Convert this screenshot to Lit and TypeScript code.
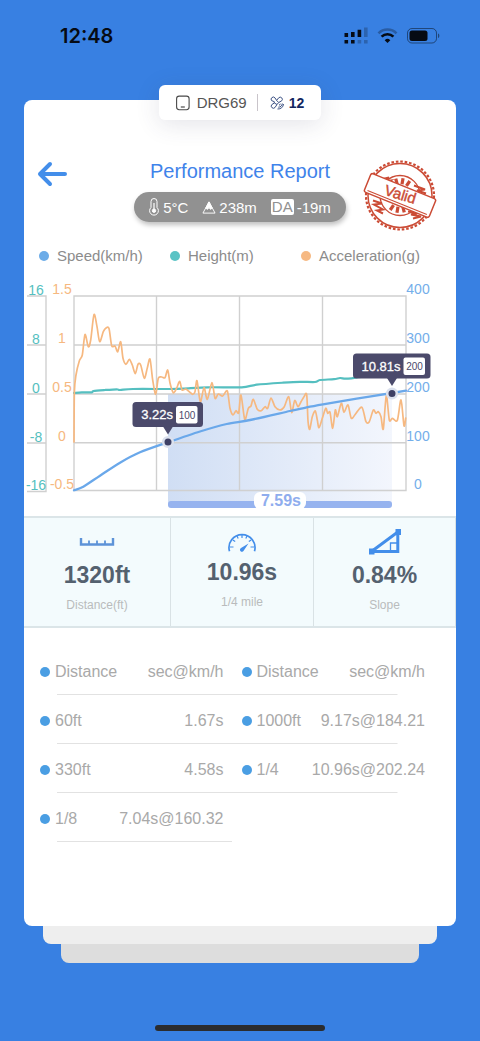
import { LitElement, html, svg, css } from "lit";
import { customElement } from "lit/decorators.js";

type Point = [number, number];

const ACCELERATION: Point[] = [
  [74, 442], [74.4, 392], [76, 375], [79.3, 361], [82.3, 355], [85, 334.5], [88.3, 346.7], [90.7, 340],
  [94, 314.5], [97, 326.7], [99.7, 341.7], [103.3, 331.7], [106, 328], [109, 328.5], [111.7, 345.7],
  [115, 346], [117.7, 351.7], [120.7, 341.7], [123, 358.3], [126, 364.3], [129.3, 359.3], [132.3, 365],
  [135.3, 373.7], [138, 364.3], [140.7, 365], [144.3, 378.3], [147.3, 368], [150, 359], [152.7, 380],
  [155.7, 394.3], [158.3, 378.3], [161.7, 377], [165, 377.7], [167.7, 370], [170, 383], [173.3, 392.7],
  [176.7, 388], [179.7, 381.3], [182, 390], [185.7, 389], [189.3, 391.7], [192.7, 394.3], [195, 391.7],
  [197, 380.7], [200.3, 401.7], [204, 387.7], [207.3, 399.3], [212, 382.7], [215, 398.3], [218.3, 394],
  [222.7, 396], [227.3, 391], [230, 408.3], [233, 415], [236, 410.7], [238.7, 412.7], [241, 395],
  [244.7, 419.3], [248.3, 408.3], [251, 406], [253.3, 399.3], [257.3, 409.3], [261.3, 410.7],
  [265, 406.7], [267.7, 408.3], [271, 398], [275, 406.7], [280, 410], [284.3, 406.7], [288.7, 396.7],
  [291.7, 412.5], [294.7, 400.5], [298, 406.7], [301, 401.7], [304, 396.7], [306.7, 394.6], [308, 421],
  [309.7, 429.3], [312.3, 416.7], [315.3, 411], [317.3, 420], [319, 427.7], [322.3, 418.3],
  [325.7, 408.3], [327.7, 413.3], [330, 412.3], [332.7, 428.3], [335.3, 410], [337.3, 416.7],
  [341.3, 403.3], [344, 412.3], [348, 405], [351.3, 418.3], [356, 413.3], [362, 407.3], [366, 421.7],
  [369.3, 421.7], [373.3, 410], [376, 413.3], [378.3, 411.7], [381, 416.7], [383.3, 429], [386.3, 395.7],
  [389.3, 420], [392.3, 418.3], [397.3, 420.3], [401, 400], [404, 425.7], [405.7, 418],
];

const HEIGHT: Point[] = [
  [74, 393], [81.7, 392.3], [91.7, 392.3], [93.5, 391], [105, 390], [116.7, 389.3], [120, 390], [133, 389],
  [170, 389], [183, 388.7], [208, 387.3], [241.7, 387.3], [256.7, 384.7], [283, 382.7], [300, 381.8],
  [315, 382], [320, 380], [334, 379.2], [340, 378], [345, 378.7], [351.7, 378.3], [361.7, 377], [390, 375],
];

const SPEED: Point[] = [
  [74, 490.3], [83.3, 486.7], [100, 475.7], [120, 462.7], [140, 452.3], [168, 442.3], [200, 431.5],
  [226.7, 424], [250, 420], [290, 411], [306.7, 407.3], [323, 404.3], [356.7, 398.7], [392, 393], [406, 390.7],
];

/** Catmull-Rom spline through the points, as cubic Bézier segments. */
function curve(points: Point[]): string {
  const last = points.length - 1;
  let d = `M${points[0][0]} ${points[0][1]}`;
  for (let i = 0; i < last; i++) {
    const p0 = points[Math.max(i - 1, 0)];
    const p1 = points[i];
    const p2 = points[i + 1];
    const p3 = points[Math.min(i + 2, last)];
    const c = [
      p1[0] + (p2[0] - p0[0]) / 7, p1[1] + (p2[1] - p0[1]) / 7,
      p2[0] - (p3[0] - p1[0]) / 7, p2[1] - (p3[1] - p1[1]) / 7,
      p2[0], p2[1],
    ].map((n) => n.toFixed(2));
    d += `C${c.join(" ")}`;
  }
  return d;
}

@customElement("run-chart")
export class RunChart extends LitElement {
  static styles = css`
    :host { display: block; }
    .chart { display: block; width: 100%; height: auto; font-family: "Liberation Sans", Arial, sans-serif; }
    .grid { fill: none; stroke: #d0d0d0; stroke-width: 1.4; }
    .tick { font-size: 14px; text-anchor: middle; }
    .height { fill: #55bfc0; }
    .accel { fill: #f6b880; }
    .speed { fill: #74aeea; }
    .line { fill: none; stroke-linejoin: round; stroke-linecap: round; }
    .line-height { stroke: #55bfc0; stroke-width: 2.2; }
    .line-accel { stroke: #f6b880; stroke-width: 1.7; }
    .line-speed { stroke: #6aa8ea; stroke-width: 2.3; }
    .tip { fill: #4b4a6b; }
    .tip-time { fill: #fff; stroke: #fff; stroke-width: 0.3; font-size: 13px; text-anchor: end; }
    .tip-box { fill: #fff; }
    .tip-speed { fill: #4b4a6b; font-size: 10px; text-anchor: middle; }
    .dot { fill: #3e4065; stroke: #dbe1ee; stroke-width: 2.6; }
    .span { fill: #96b3ef; }
    .span-plate { fill: #fff; }
    .span-text { fill: #8fadee; font-size: 16px; font-weight: 700; text-anchor: middle; }
  `;

  private marker(x: number, y: number, left: number, right: number, time: string, speed: string) {
    const top = y - 40;
    return svg`
      <rect class="tip" x=${left} y=${top} width=${right - left} height="25" rx="3.5"></rect>
      <path class="tip" d="M${x - 5} ${top + 24.5}h10l-5 8z"></path>
      <text class="tip-time" x=${right - 30} y=${top + 17}>${time}</text>
      <rect class="tip-box" x=${right - 27} y=${top + 4} width="21.5" height="17.5" rx="2"></rect>
      <text class="tip-speed" x=${right - 16} y=${top + 16.5}>${speed}</text>
      <circle class="dot" cx=${x} cy=${y} r="4.8"></circle>`;
  }

  render() {
    const rows = [296, 345, 394, 443, 491];
    const heights = ["16", "8", "0", "-8", "-16"];
    const accels = ["1.5", "1", "0.5", "0", "-0.5"];
    const speeds = ["400", "300", "200", "100", "0"];
    return html`
      <svg class="chart" viewBox="24 276 432 240" role="img" aria-label="Speed, height and acceleration over time">
        <defs>
          <linearGradient id="shade">
            <stop offset="0" stop-color="#d0def4"></stop>
            <stop offset="1" stop-color="#f3f6fd"></stop>
          </linearGradient>
        </defs>
        <rect x="168" y="394" width="224" height="110" fill="url(#shade)"></rect>
        <path class="grid" d="M74 296H406V490.5H74ZM74 345H406M74 394H406M74 442.7H406M156.5 296V490.5M239.5 296V490.5M322.5 296V490.5"></path>
        <path class="grid" d="M27 296H46V491.5H27M27 345H46M27 394H46M27 443H46"></path>
        ${rows.map((y, i) => svg`
          <text class="tick height" x="36" y=${y - 1}>${heights[i]}</text>
          <text class="tick accel" x="62" y=${y - 2}>${accels[i]}</text>
          <text class="tick speed" x="418" y=${y - 2}>${speeds[i]}</text>`)}
        <path class="line line-height" d=${curve(HEIGHT)}></path>
        <path class="line line-accel" d=${curve(ACCELERATION)}></path>
        <path class="line line-speed" d=${curve(SPEED)}></path>
        <rect class="span" x="168" y="501" width="224" height="7" rx="3"></rect>
        <rect class="span-plate" x="254" y="492" width="52" height="17" rx="6"></rect>
        <text class="span-text" x="281" y="506">7.59s</text>
        ${this.marker(168, 442, 132.5, 203, "3.22s", "100")}
        ${this.marker(392, 393.5, 353, 430.5, "10.81s", "200")}
      </svg>`;
  }
}

@customElement("app-root")
export class AppRoot extends LitElement {
  static styles = css`
    :host {
      display: flex;
      flex-direction: column;
      min-height: 100vh;
      box-sizing: border-box;
      background: #3880e2;
      font-family: "Liberation Sans", Arial, sans-serif;
    }
    svg { display: block; }
    .status {
      display: flex;
      align-items: center;
      justify-content: space-between;
      height: 72px;
      margin-bottom: 28px;
      padding: 0 40px 0 60px;
      box-sizing: border-box;
    }
    .clock { font: 600 20px/24px Inter, sans-serif; color: #060b14; }
    .card {
      flex: 1;
      display: flex;
      flex-direction: column;
      margin: 0 24px;
      background: #fff;
      border-radius: 8px;
    }
    .badge {
      display: flex;
      align-items: center;
      align-self: center;
      height: 35px;
      margin-top: -15px;
      padding: 0 17px;
      background: #fff;
      border-radius: 6px;
      box-shadow: 0 4px 24px rgba(60, 60, 90, 0.14);
      color: #555;
      font-size: 15px;
    }
    .device { margin: 0 10px 0 7px; }
    .rule { width: 1px; height: 17px; margin-right: 12px; background: #c9c4ca; }
    .sats { margin-left: 5px; color: #12265f; font-weight: 700; font-size: 14px; }
    .head {
      display: grid;
      grid-template-columns: 1fr auto 1fr;
      min-height: 73px;
      margin-top: 39px;
      padding: 0 13px;
    }
    .back { justify-self: start; align-self: start; padding: 2px 0; border: 0; background: none; cursor: pointer; }
    .middle { display: flex; flex-direction: column; align-items: center; gap: 9px; }
    .title { margin: 0; color: #3f83ea; font-size: 20px; line-height: 24px; font-weight: 400; }
    .pill {
      display: flex;
      align-items: center;
      gap: 14px;
      height: 30px;
      padding: 0 15px 0 14px;
      border-radius: 15px;
      background: #919191;
      box-shadow: 1px 3px 5px rgba(0, 0, 0, 0.25);
      color: #fff;
      font-size: 15px;
    }
    .reading { display: flex; align-items: center; gap: 3px; white-space: nowrap; }
    .da { padding: 0 1px; border-radius: 2px; background: #fff; color: #919191; line-height: 16px; }
    .stamp { justify-self: end; margin-right: 6px; }
    .stamp-text { font: 15px "Liberation Sans", Arial, sans-serif; text-anchor: middle; }
    .legend {
      display: grid;
      grid-template-columns: repeat(3, 1fr);
      margin: 14px 24px 10px 15px;
      padding: 0;
      list-style: none;
      font-size: 15px;
      line-height: 20px;
    }
    .key { display: flex; align-items: center; gap: 8px; white-space: nowrap; }
    .key::before { content: ""; width: 10px; height: 10px; flex: none; border-radius: 50%; background: currentColor; }
    .key span { color: #8c8c8c; }
    .k-speed { color: #6cace8; }
    .k-height { color: #5bc3c5; }
    .k-accel { color: #f6b983; }
    .stats {
      display: grid;
      grid-template-columns: 147fr 143fr 142fr;
      border: 2px solid #dbe5e8;
      border-width: 2px 0;
      background: #f3fbfd;
    }
    .stat {
      display: flex;
      flex-direction: column;
      align-items: center;
      height: 108px;
      padding-top: 10px;
      box-sizing: border-box;
      border-right: 1px solid #d9e2e5;
    }
    .figure { display: grid; place-items: center; height: 27px; }
    .figure-low { height: 24px; place-items: end; }
    .value { margin-top: 6px; color: #54616f; font-size: 23px; line-height: 28px; font-weight: 700; }
    .caption { margin-top: 8px; color: #b9bbbc; font-size: 12px; line-height: 16px; }
    .splits {
      width: calc(100% - 47px);
      margin: 18px 31px 0 16px;
      border-collapse: collapse;
      table-layout: fixed;
      color: #a9a9a9;
      font-size: 16px;
    }
    .splits tr {
      height: 49px;
      background: linear-gradient(#e2e2e2, #e2e2e2) no-repeat 17px 100% / calc(100% - 45px) 1px;
    }
    .splits .short { background-size: calc(50% - 18px) 1px; }
    .splits th, .splits td { padding: 2px 0 0; font-weight: 400; white-space: nowrap; }
    .name { text-align: left; }
    .name::before {
      content: "";
      display: inline-block;
      width: 10px;
      height: 10px;
      margin-right: 5px;
      border-radius: 50%;
      background: #4a9ee3;
    }
    .time { text-align: right; }
    .c-name { width: 70px; }
    .c-gap { width: 18px; }
    .layer { height: 18px; border-radius: 0 0 8px 8px; }
    .layer-1 { margin: 0 43px; background: #eee; }
    .layer-2 { margin: 0 61px; height: 19px; background: #ddd; }
    .home { width: 170px; height: 6px; margin: 62px auto 10px; border-radius: 3px; background: #2b2c2e; }
  `;

  private statusIcons() {
    return html`
      <svg width="96" height="18" viewBox="344 27 96 18" aria-hidden="true" fill="#060b14">
        <path d="M344.5 33h3.6v4h-3.6zM351 32h3.6v5H351zM357.6 29.8h3.6v7.2h-3.6zM344.5 40h3.6v3.6h-3.6zM351 40h3.6v3.6H351z"></path>
        <path opacity=".25" d="M364 27.5h3.6V37H364zM357.6 40h3.6v3.6h-3.6zM364 40h3.6v3.6H364z"></path>
        <path d="M378.5 33.3a12.6 12.6 0 0 1 18 0" fill="none" stroke="#060b14" stroke-width="2.6" opacity=".3"></path>
        <path d="M381.6 36.7a8.3 8.3 0 0 1 11.8 0" fill="none" stroke="#060b14" stroke-width="2.6"></path>
        <path d="M384.7 40.2a4 4 0 0 1 5.6 0L387.5 43z"></path>
        <rect x="407.5" y="28.5" width="29" height="14.5" rx="4.5" fill="none" stroke="#060b14" opacity=".5"></rect>
        <rect x="409.5" y="30.5" width="18" height="10.5" rx="2.5"></rect>
        <path d="M438 33.5v4.5c1.8-.6 1.8-3.9 0-4.5z" opacity=".5"></path>
      </svg>`;
  }

  private stamp() {
    const rays = [-62, -38, -14, 10, 34, 118, 142, 166, 190, 214];
    return html`
      <svg class="stamp" width="74" height="73" viewBox="-37 -36.5 74 73" role="img" aria-label="Valid">
        <g fill="none" stroke="#cb4b35">
          <circle r="34" stroke-width="2.2" stroke-dasharray="2.6 1.85"></circle>
          <circle r="32" stroke-width="1.5"></circle>
          <circle r="20" stroke-width="1.3"></circle>
          ${rays.map((a) => svg`<path d="M0 -11.5V-17.5" stroke-width="3.2" transform="rotate(${a})"></path>`)}
          <path d="M-19-16l8-2-5 4 7-1-5 4M14-10l11 4-8 1 9 3M-27 5l9 3-8 1 9 5-6 1 6 3M8 16l9 2-6 1 10 2-8 2" stroke-width="2"></path>
        </g>
        <g transform="rotate(22)">
          <rect x="-35" y="-10" width="70" height="20" rx="2" fill="#fff" stroke="#cb4b35" stroke-width="1.5"></rect>
          <path d="M-32 7.5H32" stroke="#cb4b35" stroke-width="1"></path>
        </g>
        <text class="stamp-text" transform="rotate(17)" x="0" y="4" fill="#cb4b35" stroke="#cb4b35" stroke-width=".4">Valid</text>
      </svg>`;
  }

  render() {
    const splits = [
      ["60ft", "1.67s", "1000ft", "9.17s@184.21"],
      ["330ft", "4.58s", "1/4", "10.96s@202.24"],
    ];
    return html`
      <header class="status">
        <span class="clock">12:48</span>
        ${this.statusIcons()}
      </header>

      <main class="card">
        <div class="badge">
          <svg width="14" height="16" viewBox="0 0 14 16" fill="none" stroke="#4a4a4a" aria-hidden="true">
            <rect x=".6" y="1.1" width="12.5" height="13.6" rx="2.6" stroke-width="1.1"></rect>
            <path d="M4.8 12h4" stroke-width="1.2"></path>
          </svg>
          <span class="device">DRG69</span>
          <span class="rule"></span>
          <svg width="14" height="14" viewBox="0 0 14 14" fill="none" stroke="#3d5284" stroke-linejoin="round" aria-hidden="true">
            <path d="M4.300 5.700 1.600 4.600A2.100 2.100 0 1 1 5 1.900L6.600 4.400 8.700 1.800A2.100 2.100 0 1 1 11.700 4.800L8.700 6.500 7 8.500 5 11.500A2.100 2.100 0 1 1 1.800 8.600L4.300 7z"></path>
            <path d="M6.600 4.400 8.700 6.500M4.300 7 7 8.500M9 9.200c.8-.2 1.300-.7 1.500-1.500M8.300 11.200c2.200 0 3.900-1.400 4-3.700M7.500 13c3.400.2 5.700-1.800 6-5"></path>
          </svg>
          <span class="sats">12</span>
        </div>

        <div class="head">
          <button class="back" aria-label="Back">
            <svg width="30" height="26" viewBox="0 0 30 26" fill="none" stroke="#438eea" stroke-width="4" stroke-linecap="round" stroke-linejoin="round">
              <path d="M28 13H3M13 3 3 13l10 10"></path>
            </svg>
          </button>
          <div class="middle">
            <h1 class="title">Performance Report</h1>
            <div class="pill">
              <span class="reading">
                <svg width="12" height="18" viewBox="0 0 12 18" fill="none" stroke="#fff" stroke-width="1" aria-hidden="true">
                  <path d="M3 9.5V3.5a3 3 0 0 1 6 0v6a4.4 4.4 0 1 1-6 0z"></path>
                  <path d="M6 5v7" stroke-width="1.2"></path>
                  <circle cx="6" cy="12.7" r="1.7" fill="#fff"></circle>
                </svg>
                5°C
              </span>
              <span class="reading">
                <svg width="14" height="15" viewBox="0 0 15 15" fill="none" stroke="#fff" aria-hidden="true">
                  <path d="M7.5 1.5 1 13.5h13z"></path>
                  <path d="M7.5 1.5 4 8.2l2 1.3 1.5-2 1.5 2 2-1.3z" fill="#fff"></path>
                </svg>
                238m
              </span>
              <span class="reading"><span class="da">DA</span>-19m</span>
            </div>
          </div>
          ${this.stamp()}
        </div>

        <ul class="legend">
          <li class="key k-speed"><span>Speed(km/h)</span></li>
          <li class="key k-height"><span>Height(m)</span></li>
          <li class="key k-accel"><span>Acceleration(g)</span></li>
        </ul>

        <run-chart></run-chart>

        <section class="stats">
          <div class="stat">
            <div class="figure">
              <svg width="36" height="8" viewBox="0 0 36 8" fill="none" stroke="#5d93d8" aria-hidden="true">
                <path d="M2 0v6.5h32V0" stroke-width="2.4"></path>
                <path d="M10 6V2.5M18 6V2.5M26 6V2.5" stroke-width="1.8"></path>
              </svg>
            </div>
            <div class="value">1320ft</div>
            <div class="caption">Distance(ft)</div>
          </div>
          <div class="stat">
            <div class="figure figure-low">
              <svg width="28" height="19" viewBox="0 0 28 19" fill="none" stroke="#438eea" aria-hidden="true">
                <path d="M1.5 18.2A13 13 0 1 1 26.5 18.2" stroke-width="1.7"></path>
                <path d="M2 14h3.5M26 14h-3.5M4.8 7l2.4 1.6M23.2 7l-2.4 1.600M9 3l1.2 2.6M19 3l-1.2 2.6M14 2v3" stroke-width="1.2"></path>
                <path d="M20.5 10.5 15.8 17.5a2 2 0 1 1-2.8-2.5z" fill="#438eea" stroke="none"></path>
              </svg>
            </div>
            <div class="value">10.96s</div>
            <div class="caption">1/4 mile</div>
          </div>
          <div class="stat">
            <div class="figure">
              <svg width="32" height="26" viewBox="0 0 32 26" fill="none" stroke="#438eea" aria-hidden="true">
                <path d="M2.5 22.5 28.8 3V22.5z" stroke-width="3"></path>
                <path d="M21.5 22V14H28" stroke-width="1.3"></path>
                <path d="M0 19.5h5.5V25.5H0zM26.5 0H32v6h-5.5z" fill="#438eea" stroke="none"></path>
              </svg>
            </div>
            <div class="value">0.84%</div>
            <div class="caption">Slope</div>
          </div>
        </section>

        <table class="splits">
          <colgroup>
            <col class="c-name"><col><col class="c-gap"><col class="c-name"><col>
          </colgroup>
          <thead>
            <tr>
              <th class="name" scope="col">Distance</th>
              <th class="time" scope="col">sec@km/h</th>
              <td></td>
              <th class="name" scope="col">Distance</th>
              <th class="time" scope="col">sec@km/h</th>
            </tr>
          </thead>
          <tbody>
            ${splits.map(([d1, t1, d2, t2]) => html`
              <tr>
                <td class="name">${d1}</td>
                <td class="time">${t1}</td>
                <td></td>
                <td class="name">${d2}</td>
                <td class="time">${t2}</td>
              </tr>`)}
            <tr class="short">
              <td class="name">1/8</td>
              <td class="time">7.04s@160.32</td>
              <td colspan="3"></td>
            </tr>
          </tbody>
        </table>
      </main>
      <div class="layer layer-1"></div>
      <div class="layer layer-2"></div>
      <div class="home"></div>
    `;
  }
}
